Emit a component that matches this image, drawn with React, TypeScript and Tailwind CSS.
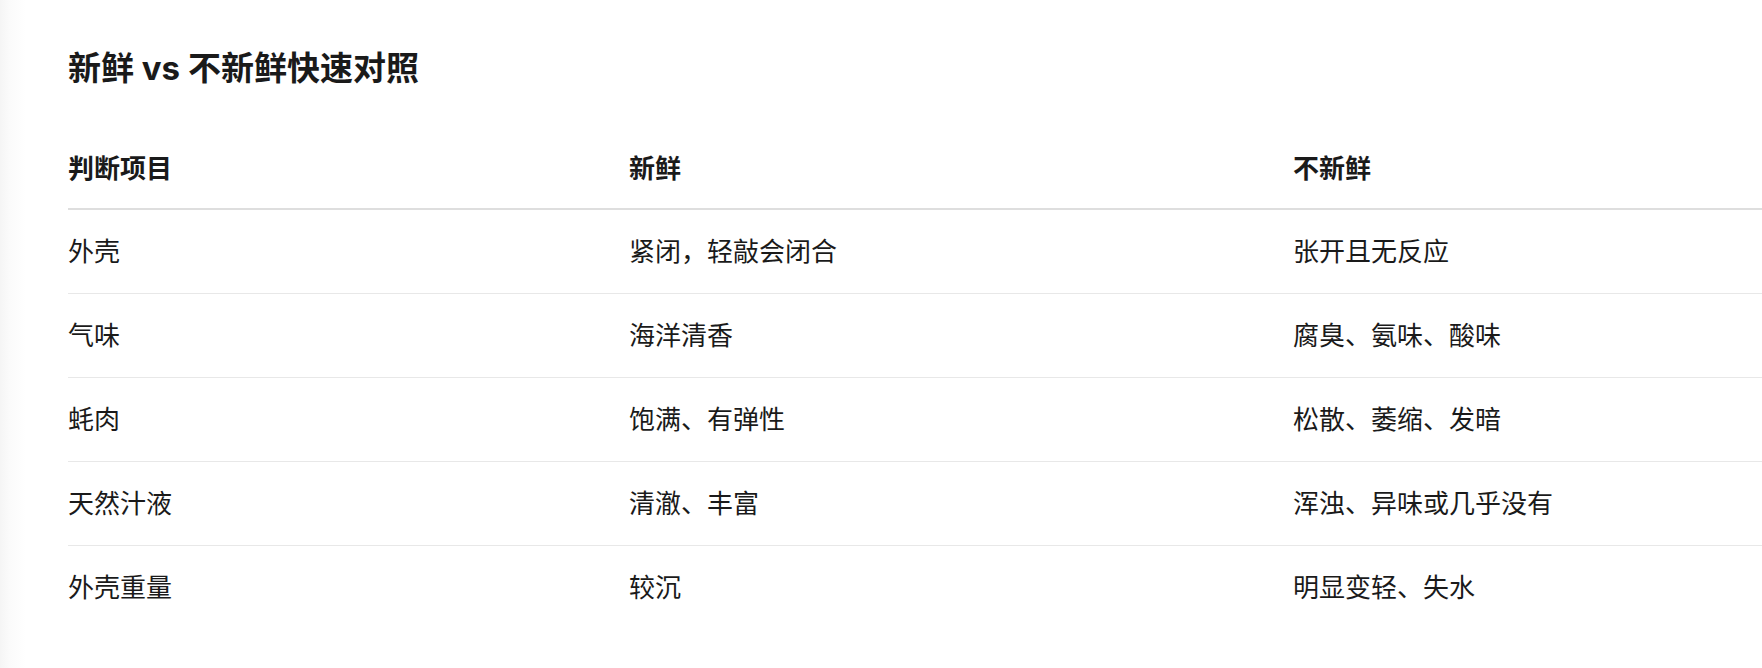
import React from "react";

type Row = { item: string; fresh: string; stale: string };

const ROWS: Row[] = [
  { item: "外壳", fresh: "紧闭，轻敲会闭合", stale: "张开且无反应" },
  { item: "气味", fresh: "海洋清香", stale: "腐臭、氨味、酸味" },
  { item: "蚝肉", fresh: "饱满、有弹性", stale: "松散、萎缩、发暗" },
  { item: "天然汁液", fresh: "清澈、丰富", stale: "浑浊、异味或几乎没有" },
  { item: "外壳重量", fresh: "较沉", stale: "明显变轻、失水" },
];

const COLS = "grid grid-cols-[561px_664px_1fr]";

export default function App() {
  return (
    <div
      className="min-h-screen overflow-hidden bg-[linear-gradient(to_right,#f5f5f5,#fbfbfb_10px,#ffffff_26px)] pl-[68px] pt-[46px] text-[#1a1a1a]"
      style={{ fontFamily: '"Inter", "Noto Sans CJK SC", sans-serif' }}
    >
      <h2 className="mb-[37px] text-[33px] font-bold leading-[44px]">
        新鲜 vs 不新鲜快速对照
      </h2>

      <div className="text-[26px] leading-[39px]">
        <div className={`${COLS} border-b-2 border-[#dedede] font-bold`}>
          <div className="pt-[22px] pb-[20px]">判断项目</div>
          <div className="pt-[22px] pb-[20px]">新鲜</div>
          <div className="pt-[22px] pb-[20px]">不新鲜</div>
        </div>
        {ROWS.map((row, i) => (
          <div
            key={row.item}
            className={`${COLS} ${i < ROWS.length - 1 ? "border-b border-[#e8e8e8]" : ""}`}
          >
            <div className="py-[22px]">{row.item}</div>
            <div className="py-[22px]">{row.fresh}</div>
            <div className="py-[22px]">{row.stale}</div>
          </div>
        ))}
      </div>
    </div>
  );
}
